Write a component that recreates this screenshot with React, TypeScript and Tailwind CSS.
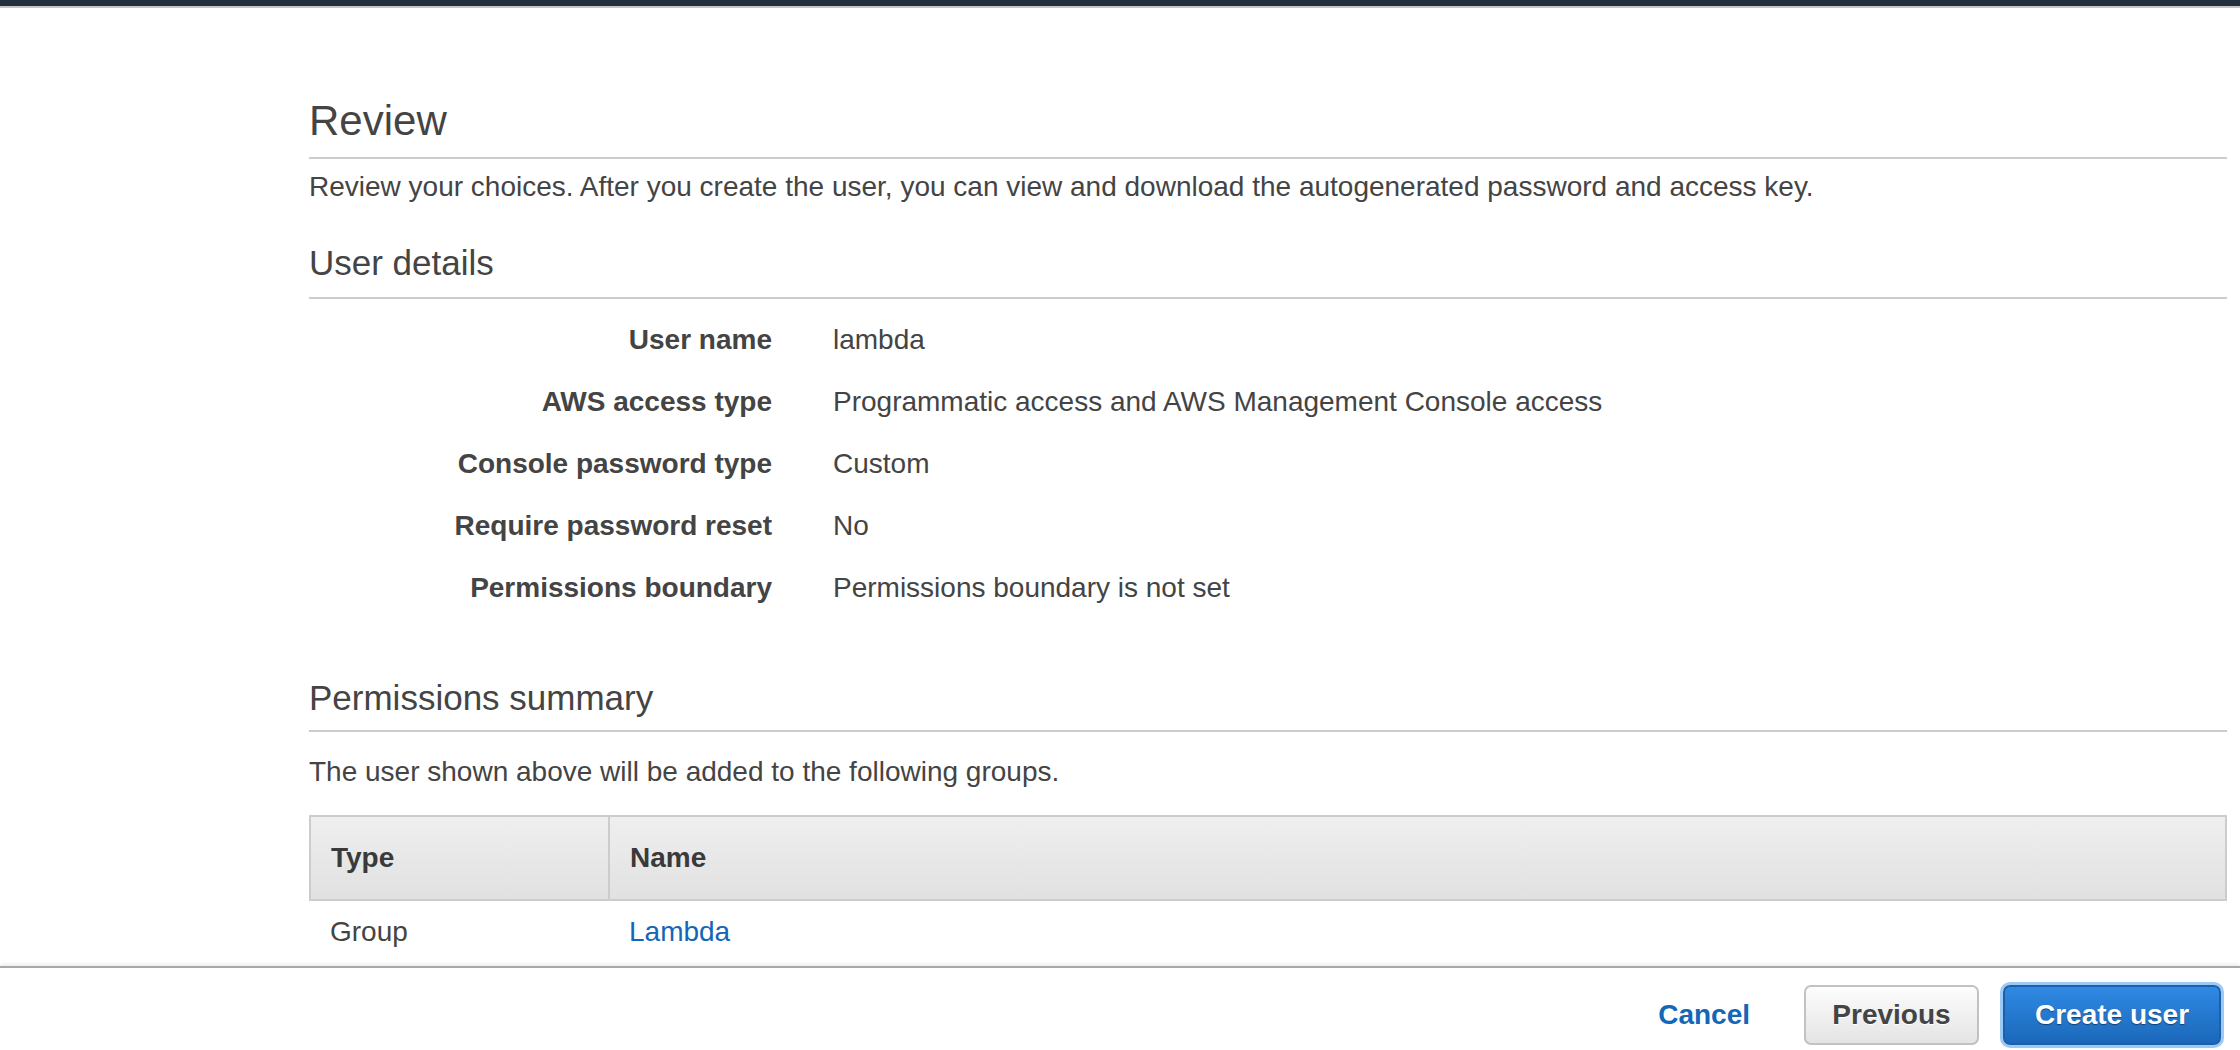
import React from 'react';

const details: { label: string; value: string }[] = [
  { label: 'User name', value: 'lambda' },
  { label: 'AWS access type', value: 'Programmatic access and AWS Management Console access' },
  { label: 'Console password type', value: 'Custom' },
  { label: 'Require password reset', value: 'No' },
  { label: 'Permissions boundary', value: 'Permissions boundary is not set' },
];

const App: React.FC = () => {
  return (
    <div className="h-screen flex flex-col bg-white text-[#444] overflow-hidden font-['Liberation_Sans',Arial,sans-serif]">
      {/* Top console bar */}
      <div className="h-[6px] bg-[#232f3e] shrink-0"></div>
      <div className="h-[2px] bg-[#c6c6c6] shrink-0"></div>

      {/* Review content */}
      <main className="flex-1 overflow-hidden pl-[309px] pr-[13px] pt-[89px]">
        <h1 className="text-[42px] leading-[48px] font-normal pb-[12px] border-b-2 border-[#cccccc]">Review</h1>
        <p className="text-[28px] leading-[40px] mt-[8px]">
          Review your choices. After you create the user, you can view and download the autogenerated password and access key.
        </p>

        <h2 className="text-[35px] leading-[40px] font-normal mt-[36px] pb-[14px] border-b-2 border-[#cccccc]">User details</h2>
        <dl className="mt-[10px]">
          {details.map((d) => (
            <div key={d.label} className="flex py-[11px] text-[28px] leading-[40px]">
              <dt className="w-[463px] shrink-0 text-right font-bold">{d.label}</dt>
              <dd className="ml-[61px]">{d.value}</dd>
            </div>
          ))}
        </dl>

        <h2 className="text-[35px] leading-[40px] font-normal mt-[59px] pb-[12px] border-b-2 border-[#cccccc]">Permissions summary</h2>
        <p className="text-[28px] leading-[40px] mt-[20px]">The user shown above will be added to the following groups.</p>

        <table className="w-full mt-[23px] border-collapse text-[28px] leading-[40px]">
          <thead>
            <tr className="bg-gradient-to-b from-[#efefef] to-[#e1e1e1]">
              <th className="w-[299px] text-left font-bold text-[#3a3a3a] border-2 border-[#cccccc] px-[20px] py-[21px]">Type</th>
              <th className="text-left font-bold text-[#3a3a3a] border-2 border-[#cccccc] px-[20px] py-[21px]">Name</th>
            </tr>
          </thead>
          <tbody>
            <tr>
              <td className="px-[20px] py-[11px]">Group</td>
              <td className="px-[20px] py-[11px]">
                <a className="text-[#1466b8]" href="#">Lambda</a>
              </td>
            </tr>
          </tbody>
        </table>
      </main>

      {/* Wizard footer */}
      <footer className="shrink-0 h-[84px] border-t-2 border-[#a8a8a8] shadow-[0_-2px_4px_rgba(0,0,0,0.08)] bg-white flex items-start justify-end pt-[17px] pr-[19px] font-bold text-[28px]">
        <button className="h-[60px] px-[10px] text-[#1466b8]">Cancel</button>
        <button className="ml-[44px] h-[60px] w-[175px] rounded-[7px] border-2 border-[#c2c2c2] bg-gradient-to-b from-[#fdfdfd] to-[#e4e4e4] text-[#444] [text-shadow:0_1px_0_#fff]">
          Previous
        </button>
        <button className="ml-[24px] h-[60px] w-[218px] rounded-[7px] border-2 border-[#1d5fa8] bg-gradient-to-b from-[#3089e3] to-[#1b68bb] text-white shadow-[0_0_0_3px_#9ccaf6] [text-shadow:0_1px_1px_rgba(0,0,0,0.45)]">
          Create user
        </button>
      </footer>
    </div>
  );
};

export default App;
